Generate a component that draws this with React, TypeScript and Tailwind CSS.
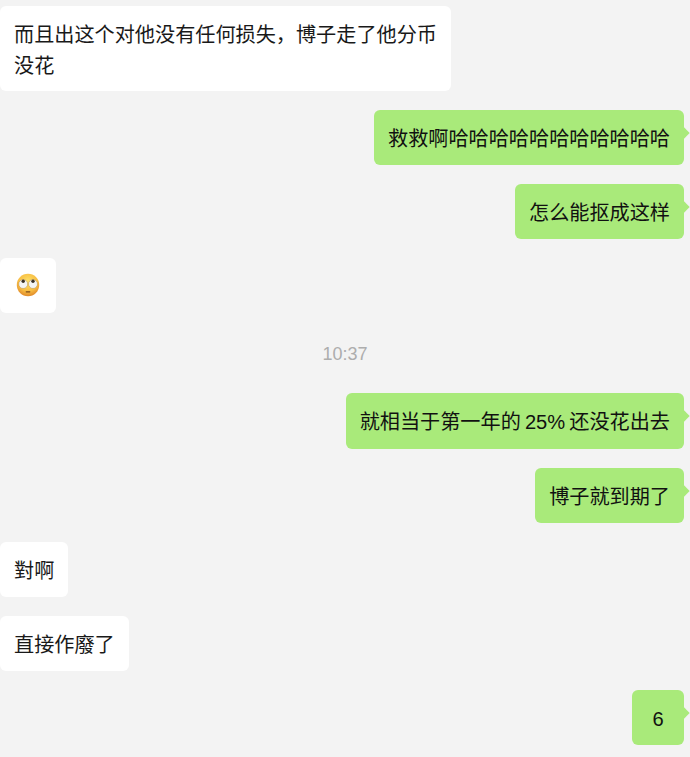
const stack = "font-['Liberation_Sans','Noto_Sans_CJK_SC',sans-serif]";

function Left({ children, className = "px-[14px] pt-[14px] pb-[10px]" }: { children: React.ReactNode; className?: string }) {
  return (
    <div className="flex justify-start">
      <div className={`rounded-[6px] bg-white text-[20.15px] leading-[31px] text-[#191919] ${className}`}>
        {children}
      </div>
    </div>
  );
}

function Right({ children, className = "pb-[10px]" }: { children: React.ReactNode; className?: string }) {
  return (
    <div className="flex justify-end">
      <div className={`relative mr-[6px] min-w-[52px] rounded-[6px] bg-[#a9ea7a] px-[14px] pt-[14px] text-center text-[20.15px] leading-[31px] text-[#111] [word-spacing:-1.5px] ${className}`}>
        {children}
        <span className="absolute right-[-4px] top-[19px] h-[8px] w-[8px] rotate-45 bg-[#a9ea7a]" />
      </div>
    </div>
  );
}

function RollingEyes() {
  return (
    <svg width="24" height="24" viewBox="0 0 24 24" className="block">
      <defs>
        <radialGradient id="f" cx="50%" cy="35%" r="65%">
          <stop offset="0%" stopColor="#fde36a" />
          <stop offset="65%" stopColor="#f8bd42" />
          <stop offset="100%" stopColor="#e08a2a" />
        </radialGradient>
      </defs>
      <circle cx="12" cy="12" r="11.2" fill="url(#f)" />
      <circle cx="7.2" cy="11" r="4.5" fill="#f4f4f4" stroke="#b98a3a" strokeWidth="0.5" />
      <circle cx="17" cy="11" r="4.5" fill="#f4f4f4" stroke="#b98a3a" strokeWidth="0.5" />
      <circle cx="7.2" cy="8.2" r="1.7" fill="#3a3026" />
      <circle cx="17" cy="8.2" r="1.7" fill="#3a3026" />
      <rect x="9.6" y="18.2" width="4.8" height="1.2" rx="0.6" fill="#7a4a1c" />
    </svg>
  );
}

export default function App() {
  return (
    <div className={`flex h-[757px] w-[690px] flex-col gap-[19px] overflow-hidden bg-[#f3f3f3] pt-[6px] ${stack}`}>
      <Left className="px-[14px] pt-[14px] pb-[9px]">
        而且出这个对他没有任何损失，博子走了他分币
        <br />
        没花
      </Left>
      <Right>救救啊哈哈哈哈哈哈哈哈哈哈哈</Right>
      <Right>怎么能抠成这样</Right>
      <Left className="px-[16px] pt-[11px] pb-[13px]">
        <div className="flex h-[31px] items-center">
          <RollingEyes />
        </div>
      </Left>
      <div className="mb-[10px] mt-[12px] text-center text-[18px] leading-[20px] text-[#adadad]">
        10:37
      </div>
      <Right className="pb-[11px]">就相当于第一年的 25% 还没花出去</Right>
      <Right>博子就到期了</Right>
      <Left>對啊</Left>
      <Left>直接作廢了</Left>
      <Right>6</Right>
    </div>
  );
}
